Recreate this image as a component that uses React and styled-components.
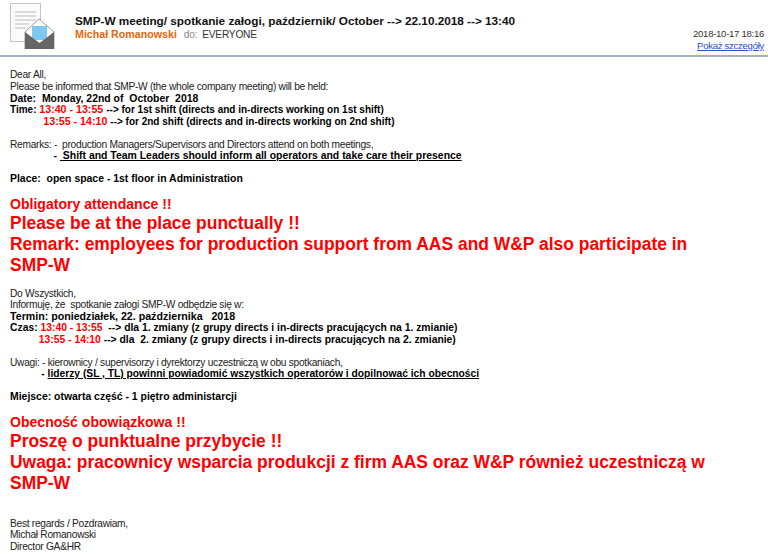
import React from 'react';
import styled, { createGlobalStyle } from 'styled-components';

const Global = createGlobalStyle`
  html, body { margin: 0; padding: 0; background: #fff; }
  body { font-family: "Liberation Sans", Arial, sans-serif; color: #000; overflow: hidden; }
`;
const Page = styled.div`width: 768px; height: 554px; overflow: hidden; background: #fff;`;
const Header = styled.header`
  height: 55px; border-bottom: 2px solid #a0b0c0; display: flex;
`;
const IconBox = styled.div`width: 75px; flex: none; padding: 3px 0 0 10px; box-sizing: border-box;`;
const HeadMain = styled.div`flex: 1; padding-top: 13px;`;
const Subject = styled.div`font-size: 11.75px; font-weight: 700; line-height: 15px; color: #111; white-space: pre;`;
const FromRow = styled.div`display: flex; align-items: baseline; font-size: 10.2px; letter-spacing: -0.25px; line-height: 12px; white-space: pre;`;
const Sender = styled.span`color: #e8650a; font-weight: 700; font-size: 10.67px; letter-spacing: 0; margin-right: 7px;`;
const Gray = styled.span`color: #8a8a8a; margin-right: 5px;`;
const To = styled.span`color: #333;`;
const HeadSide = styled.div`
  width: 120px; display: flex; flex-direction: column; align-items: flex-end; justify-content: flex-end;
  padding: 0 4px 3px 0; font-size: 9.6px; letter-spacing: -0.3px; line-height: 12px;
`;
const Stamp = styled.div`color: #333;`;
const Details = styled.a`color: #2a4fd0; text-decoration: underline;`;
const Body = styled.main`padding: 12px 0 0 10px;`;
const Line = styled.div`
  font-size: ${p => p.$fs || (p.$big ? 17.46 : p.$mid ? 14.05 : p.$strong ? 10.45 : 10.2)}px;
  letter-spacing: ${p => (p.$strong || p.$big || p.$mid) ? 0 : -0.28}px;
  line-height: ${p => p.$big ? 21 : p.$mid ? 18 : 11.5}px;
  font-weight: ${p => p.$strong ? 700 : 400};
  color: ${p => p.$red ? '#f00' : p.$strong ? '#000' : '#222'};
  white-space: pre;
  margin-top: ${p => p.$gap || 0}px;
`;
const Red = styled.span`color: #f00; font-size: ${p => p.$fs ? `${p.$fs}px` : 'inherit'};`;
const Under = styled.span`text-decoration: underline;`;

const Icon = () => (
  <svg width="46" height="46" viewBox="0 0 46 46">
    <rect x="0.5" y="0.5" width="30" height="38" fill="#fbfbfb" stroke="#c4c4c4" />
    <path d="M5 9h21M5 13h21M5 17h21M5 21h14M5 25h10" stroke="#bdbdbd" fill="none" />
    <path d="M15 29L29 16L44 29V47H15Z" fill="#fff" stroke="#9a9a9a" />
    <rect x="22" y="23" width="15" height="14" fill="#7cc8f2" />
    <path d="M15 29L29.5 40L44 29V47H15Z" fill="#666" />
  </svg>
);

export default function App() {
  return (
    <Page>
      <Global />
      <Header>
        <IconBox><Icon /></IconBox>
        <HeadMain>
          <Subject>SMP-W meeting/ spotkanie załogi, październik/ October --&gt; 22.10.2018 --&gt; 13:40</Subject>
          <FromRow><Sender>Michał Romanowski</Sender><Gray>do:</Gray><To>EVERYONE</To></FromRow>
        </HeadMain>
        <HeadSide>
          <Stamp>2018-10-17 18:16</Stamp>
          <Details>Pokaż szczegóły</Details>
        </HeadSide>
      </Header>
      <Body>
        <Line>Dear All,</Line>
        <Line $gap={0.5}>Please be informed that SMP-W (the whole company meeting) will be held:</Line>
        <Line $strong>Date:  Monday, 22nd of  October  2018</Line>
        <Line $strong $fs={10}>Time: <Red $fs={10.67}>13:40 - 13:55 </Red>--&gt; for 1st shift (directs and in-directs working on 1st shift)</Line>
        <Line $strong $fs={10}>            <Red $fs={10.67}>13:55 - 14:10 </Red>--&gt; for 2nd shift (directs and in-directs working on 2nd shift)</Line>
        <Line> </Line>
        <Line>Remarks: -  production Managers/Supervisors and Directors attend on both meetings,</Line>
        <Line $strong>               <span>- </span><Under> Shift and Team Leaders should inform all operators and take care their presence</Under></Line>
        <Line> </Line>
        <Line $strong>Place:  open space - 1st floor in Administration</Line>
        <Line $mid $red $strong $gap={10}>Obligatory attendance !!</Line>
        <Line $big $red $strong>Please be at the place punctually !!</Line>
        <Line $big $red $strong>Remark: employees for production support from AAS and W&amp;P also participate in</Line>
        <Line $big $red $strong>SMP-W</Line>
        <Line $gap={12}>Do Wszystkich,</Line>
        <Line>Informuję, że  spotkanie załogi SMP-W odbędzie się w:</Line>
        <Line $strong $fs={10.65}>Termin: poniedziałek, 22. października   2018</Line>
        <Line $strong $fs={10.35}>Czas: <Red>13:40 - 13:55 </Red> --&gt; dla 1. zmiany (z grupy directs i in-directs pracujących na 1. zmianie)</Line>
        <Line $strong $fs={10.35}>          <Red>13:55 - 14:10 </Red>--&gt; dla  2. zmiany (z grupy directs i in-directs pracujących na 2. zmianie)</Line>
        <Line> </Line>
        <Line>Uwagi: - kierownicy / supervisorzy i dyrektorzy uczestniczą w obu spotkaniach,</Line>
        <Line $strong $fs={10.25}>           - <Under>liderzy (SL , TL) powinni powiadomić wszystkich operatorów i dopilnować ich obecności</Under></Line>
        <Line> </Line>
        <Line $strong>Miejsce: otwarta część - 1 piętro administarcji</Line>
        <Line $mid $red $strong $gap={10.5}>Obecność obowiązkowa !!</Line>
        <Line $big $red $strong>Proszę o punktualne przybycie !!</Line>
        <Line $big $red $strong>Uwaga: pracownicy wsparcia produkcji z firm AAS oraz W&amp;P również uczestniczą w</Line>
        <Line $big $red $strong>SMP-W</Line>
        <Line $gap={23.5}>Best regards / Pozdrawiam,</Line>
        <Line>Michał Romanowski</Line>
        <Line>Director GA&amp;HR</Line>
      </Body>
    </Page>
  );
}
